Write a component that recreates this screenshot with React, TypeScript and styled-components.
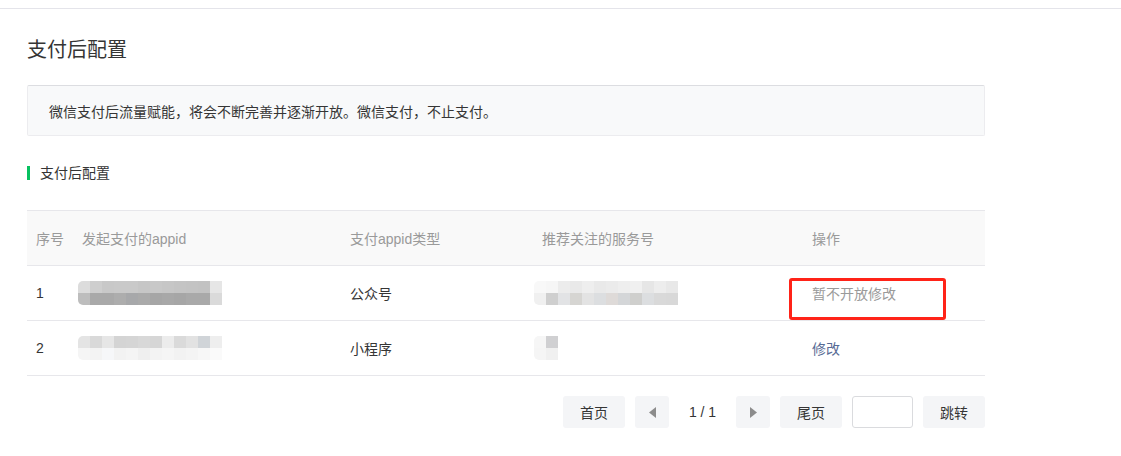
import styled, { createGlobalStyle } from 'styled-components';

const GlobalStyle = createGlobalStyle`
  html, body {
    margin: 0;
    padding: 0;
    background: #fff;
  }
  body {
    font-family: "Liberation Sans", "Noto Sans CJK SC", sans-serif;
    color: #353535;
    font-size: 14px;
  }
`;

type Cell = string;

const rowOneAppid: Cell[][] = [
  ['#dcdcdc', '#cecece', '#c8c8c8', '#c9c9c9', '#c9c9c9', '#c6c6c6', '#c8c8c8', '#c6c6c6', '#c4c4c4', '#c3c3c3', '#c2c2c2', '#e6e6e6'],
  ['#bdbdbd', '#a9a9a9', '#a9a9a9', '#adadad', '#a7a8aa', '#aaaaaa', '#a6a6a6', '#a8a8a8', '#a6a6a6', '#a9a9a9', '#a9a9a9', '#dadada'],
];
const rowTwoAppid: Cell[][] = [
  ['#e4e4e4', '#d9d9d9', '#e6e6e6', '#d4d4d4', '#d5d5d5', '#d8d8d8', '#d6d6d6', '#ececec', '#dadada', '#e2e2e2', '#d0d4d8', '#eeeeee'],
  ['#f5f5f5', '#f3f3f3', '#f6f7f9', '#f2f2f2', '#f4f4f4', '#efefef', '#f3f3f3', '#f5f5f5', '#f2f2f2', '#f4f4f4', '#f7f7f7', '#fafafa'],
];
const rowOneService: Cell[][] = [
  ['#f8f8f8', '#f6f6f6', '#ececec', '#e9e9e9', '#eeeeee', '#e9e9e9', '#ebebeb', '#eeeeee', '#f0f0f0', '#e6e6e6', '#ededed', '#e8e8e8'],
  ['#f0f0f0', '#cfcfcf', '#e2e3e5', '#d6d5d2', '#e3e3e3', '#dcdee0', '#dedad8', '#d4d6d8', '#cfcfcd', '#dcdee0', '#d9d9d9', '#d8d8d8'],
];
const rowTwoService: Cell[][] = [
  ['#f6f6f6', '#d0d0d2'],
  ['#f5f5f5', '#f0f0f0'],
];

const rows = [
  { no: '1', appid: rowOneAppid, type: '公众号', service: rowOneService, action: '暂不开放修改', locked: true },
  { no: '2', appid: rowTwoAppid, type: '小程序', service: rowTwoService, action: '修改', locked: false },
];

const TopBar = styled.div`
  height: 8px;
  border-bottom: 1px solid #e4e4ea;
`;

const Page = styled.main`
  width: 958px;
  padding: 27px 0 0 27px;
`;

const Title = styled.h2`
  margin: 0;
  font-size: 20px;
  line-height: 28px;
  font-weight: normal;
  color: #353535;
`;

const Notice = styled.div`
  margin-top: 21px;
  height: 49px;
  display: flex;
  align-items: center;
  padding-left: 21px;
  background: #f8f9fa;
  border: 1px solid #ececef;
  border-top-color: #dcdde1;
  border-radius: 2px;
  font-size: 14px;
  color: #353535;
`;

const SectionHead = styled.h3`
  margin: 30px 0 0;
  display: flex;
  align-items: center;
  gap: 10px;
  font-size: 14px;
  line-height: 14px;
  font-weight: normal;
  color: #353535;

  &::before {
    content: '';
    width: 3px;
    height: 14px;
    background: #07c160;
  }
`;

const Table = styled.div`
  margin-top: 30px;
  border-top: 1px solid #e7e7eb;
`;

const Row = styled.div<{ $head?: boolean }>`
  display: grid;
  grid-template-columns: 46px 268px 192px 270px 1fr;
  height: 54px;
  align-items: center;
  border-bottom: 1px solid #e7e7eb;
  background: ${(p) => (p.$head ? '#f9f9f9' : '#fff')};
  color: ${(p) => (p.$head ? '#9a9a9a' : '#353535')};
`;

const Td = styled.div`
  padding-left: 9px;
  white-space: nowrap;
`;

const BlurTd = styled.div<{ $inset: number }>`
  padding-left: ${(p) => p.$inset}px;
  display: flex;
`;

const Mosaic = styled.div`
  display: inline-flex;
  flex-direction: column;
  border-radius: 5px 0 0 5px;
  overflow: hidden;
`;

const MosaicRow = styled.div`
  display: flex;
`;

const Tile = styled.span`
  width: 12px;
  height: 12px;
`;

const ActionTd = styled.div`
  position: relative;
  align-self: stretch;
  display: flex;
  align-items: center;
  padding-left: 9px;
`;

const Action = styled.span<{ $locked: boolean }>`
  color: ${(p) => (p.$locked ? '#9a9a9a' : '#576b95')};
  cursor: ${(p) => (p.$locked ? 'default' : 'pointer')};
`;

const Highlight = styled.span`
  position: absolute;
  left: -14px;
  top: 12px;
  box-sizing: border-box;
  width: 157px;
  height: 42px;
  border: 3px solid #ff2318;
  border-radius: 3px;
  pointer-events: none;
`;

const Pager = styled.div`
  margin-top: 20px;
  display: flex;
  justify-content: flex-end;
  gap: 10px;
  height: 32px;
`;

const PageButton = styled.button<{ $narrow?: boolean }>`
  width: ${(p) => (p.$narrow ? '34px' : '62px')};
  height: 32px;
  border: 0;
  border-radius: 3px;
  background: #f4f5f7;
  font-family: inherit;
  font-size: 14px;
  color: #353535;
  padding: 0;
  display: flex;
  align-items: center;
  justify-content: center;
  cursor: pointer;
`;

const PageLabel = styled.span`
  width: 47px;
  display: flex;
  align-items: center;
  justify-content: center;
  color: #353535;
`;

const JumpInput = styled.input`
  box-sizing: border-box;
  width: 61px;
  height: 32px;
  border: 1px solid #dadbde;
  border-radius: 3px;
  background: #fff;
  outline: none;
`;

const Triangle = ({ dir }: { dir: 'left' | 'right' }) => (
  <svg width="7" height="11" viewBox="0 0 7 11">
    <path d={dir === 'left' ? 'M7 0 L0 5.5 L7 11 Z' : 'M0 0 L7 5.5 L0 11 Z'} fill="#8c8c8c" />
  </svg>
);

const Pixelated = ({ cells }: { cells: Cell[][] }) => (
  <Mosaic>
    {cells.map((line, i) => (
      <MosaicRow key={i}>
        {line.map((c, j) => (
          <Tile key={j} style={{ background: c }} />
        ))}
      </MosaicRow>
    ))}
  </Mosaic>
);

export default function App() {
  return (
    <>
      <GlobalStyle />
      <TopBar />
      <Page>
        <Title>支付后配置</Title>
        <Notice>微信支付后流量赋能，将会不断完善并逐渐开放。微信支付，不止支付。</Notice>
        <SectionHead>支付后配置</SectionHead>
        <Table>
          <Row $head>
            <Td>序号</Td>
            <Td>发起支付的appid</Td>
            <Td>支付appid类型</Td>
            <Td>推荐关注的服务号</Td>
            <Td>操作</Td>
          </Row>
          {rows.map((r) => (
            <Row key={r.no}>
              <Td>{r.no}</Td>
              <BlurTd $inset={5}>
                <Pixelated cells={r.appid} />
              </BlurTd>
              <Td>{r.type}</Td>
              <BlurTd $inset={1}>
                <Pixelated cells={r.service} />
              </BlurTd>
              <ActionTd>
                <Action $locked={r.locked}>{r.action}</Action>
                {r.locked && <Highlight />}
              </ActionTd>
            </Row>
          ))}
        </Table>
        <Pager>
          <PageButton>首页</PageButton>
          <PageButton $narrow>
            <Triangle dir="left" />
          </PageButton>
          <PageLabel>1 / 1</PageLabel>
          <PageButton $narrow>
            <Triangle dir="right" />
          </PageButton>
          <PageButton>尾页</PageButton>
          <JumpInput />
          <PageButton>跳转</PageButton>
        </Pager>
      </Page>
    </>
  );
}
